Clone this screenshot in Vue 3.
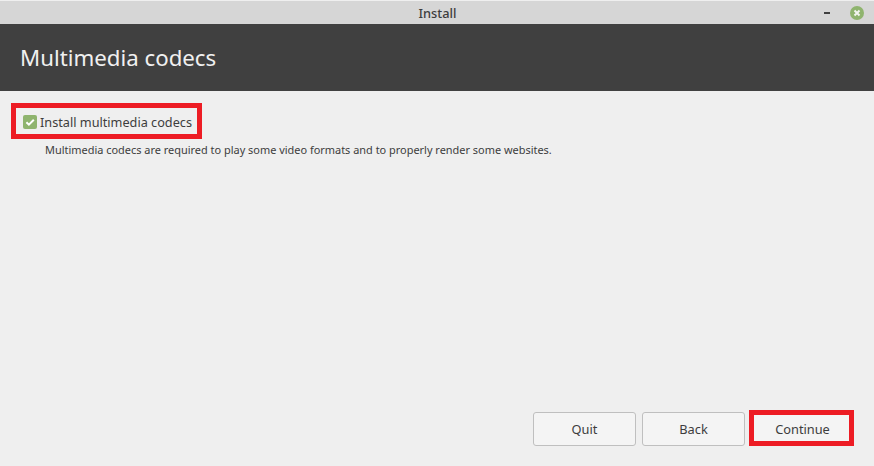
<script setup>
const buttons = ['Quit', 'Back', 'Continue']
</script>

<template>
  <div class="window">
    <div class="titlebar">
      <span class="title">Install</span>
      <div class="controls">
        <span class="minimize"></span>
        <svg class="close" width="14" height="14" viewBox="0 0 14 14">
          <circle cx="7" cy="7" r="7" fill="#8fb46e" />
          <path d="M4.5 4.5l5 5M9.5 4.5l-5 5" stroke="#f2f5ee" stroke-width="2" stroke-linecap="butt" />
        </svg>
      </div>
    </div>
    <header class="header"><h1>Multimedia codecs</h1></header>
    <main class="content">
      <div class="option">
        <div class="highlight first">
          <svg class="check" width="14" height="14" viewBox="0 0 14 14">
            <rect width="14" height="14" rx="2" fill="#8fb46e" />
            <path d="M3.4 7.3l2.5 2.4 4.9-5" fill="none" stroke="#fff" stroke-width="2" />
          </svg>
          <span class="label">Install multimedia codecs</span>
        </div>
        <p class="hint">Multimedia codecs are required to play some video formats and to properly render some websites.</p>
      </div>
      <div class="actions">
        <button v-for="b in buttons" :key="b" class="btn" :class="{ marked: b === 'Continue' }">{{ b }}</button>
      </div>
    </main>
  </div>
</template>

<style>
html, body { margin: 0; padding: 0; background: #efefef; }
</style>

<style scoped>
.window {
  width: 874px;
  height: 466px;
  display: flex;
  flex-direction: column;
  font-family: "Noto Sans", "Open Sans", sans-serif;
  background: #efefef;
  overflow: hidden;
}
.titlebar {
  height: 23px;
  border-top: 1px solid #efefef;
  background: #d6d6d6;
  display: flex;
  align-items: center;
  justify-content: center;
  position: relative;
}
.title { font-size: 12.8px; color: #3d3d3d; font-weight: 500; margin-left: 1px; }
.controls {
  position: absolute;
  right: 10px;
  top: 5px;
  display: flex;
  align-items: center;
  gap: 20px;
}
.minimize { width: 6px; height: 2px; background: #3f3f3f; }
.close { display: block; }
.header {
  height: 67px;
  background: #404040;
  display: flex;
  align-items: center;
  padding-left: 20px;
}
h1 {
  margin: 0;
  font-size: 22.25px;
  font-weight: 400;
  color: #f0f0f0;
  letter-spacing: 0;
}
.content {
  flex: 1;
  display: flex;
  flex-direction: column;
  justify-content: space-between;
  padding: 12px 20px 20px 11px;
}
.option { display: flex; flex-direction: column; align-items: flex-start; }
.highlight {
  box-sizing: border-box;
  width: 191px;
  height: 36px;
  border: 5px solid #ed1c24;
  display: flex;
  align-items: center;
  padding-left: 7px;
  padding-top: 1px;
  gap: 3px;
}
.label { font-size: 12.7px; color: #3d3d3d; white-space: nowrap; }
.hint {
  margin: 3px 0 0 34px;
  font-size: 10.95px;
  line-height: 15px;
  color: #3d3d3d;
  white-space: nowrap;
}
.actions { display: flex; justify-content: flex-end; gap: 6px; }
.btn {
  box-sizing: border-box;
  width: 103px;
  height: 34px;
  border: 1px solid #bfbfbf;
  border-radius: 3px;
  background: #f4f4f4;
  font-family: inherit;
  font-size: 12.8px;
  color: #3d3d3d;
  padding: 0;
}
.btn.marked {
  width: 105px;
  height: 36px;
  margin-top: -2px;
  margin-left: -2px;
  padding: 2px 0 0 2px;
  border: 5px solid #ed1c24;
  border-radius: 0;
}
</style>
